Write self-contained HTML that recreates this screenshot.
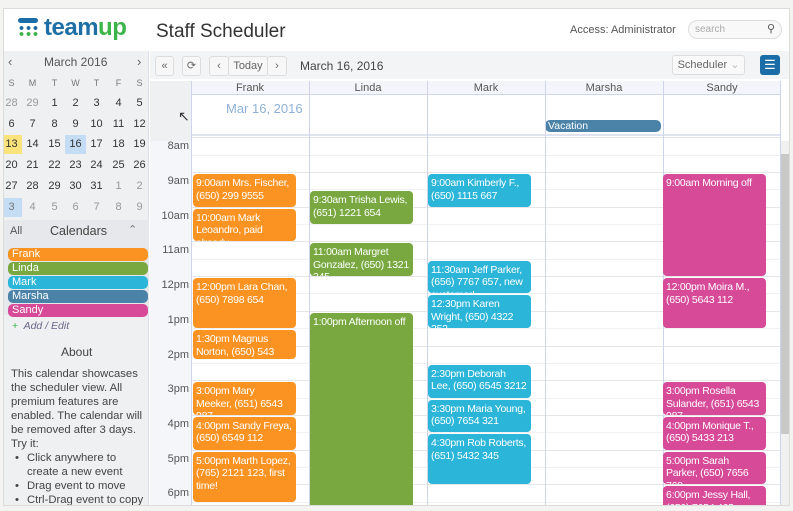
<!DOCTYPE html>
<html><head><meta charset="utf-8"><style>
*{margin:0;padding:0;box-sizing:border-box}
body{width:793px;height:511px;overflow:hidden;background:#f3f3f1;font-family:"Liberation Sans",sans-serif;position:relative}
.a{position:absolute}
#frame{left:3px;top:8px;width:787px;height:498px;background:#fff;border:1px solid #dcdcd8;overflow:hidden}
.side{left:0;top:42px;width:145px;height:460px;background:#eef0f2;border-right:1px solid #dde}
.mc{position:absolute;width:21px;text-align:center;font-size:11px;color:#333}
.g{color:#999}
.cal{position:absolute;left:4px;width:140px;height:13px;border-radius:5px;color:#fff;font-size:11px;padding-left:4px;line-height:13px}
.btn{position:absolute;top:5px;height:20px;background:#f7f7f7;border:1px solid #ddd;border-radius:3px;font-size:11px;color:#666;text-align:center;line-height:18px}
.ev{position:absolute;border-radius:4px;color:#fff;font-size:10.5px;letter-spacing:-0.25px;line-height:12.5px;padding:3px 4px 0 3px;overflow:hidden}
.o{background:#fa9322}.gr{background:#78a83f}.c{background:#2bb5d8}.p{background:#d64a98}
.hl{position:absolute;left:187px;width:589px;height:1px;background:#e4e6ea}
.hh{position:absolute;left:187px;width:589px;height:1px;background:#f0f1f3}
.tl{position:absolute;left:145px;width:40px;text-align:right;font-size:11px;color:#555}
.vl{position:absolute;width:1px;background:#d0d4ea}
.ch{position:absolute;top:72px;height:14px;font-size:11px;color:#555;text-align:center;line-height:14px}
.bl{position:relative;padding-left:16px;white-space:nowrap}
.bl span{position:absolute;left:4px}
</style></head><body>
<div id="frame" class="a">
 <div class="a" style="left:12px;top:9px">
  <div class="a" style="left:2px;top:0;width:20px;height:5px;border-radius:3px;background:#1a6da6"></div>
  <div class="a" style="left:2px;top:8px;width:20px;height:4px;background:radial-gradient(circle,#1a6da6 1.8px,transparent 2px) 0 0/7px 4px"></div>
  <div class="a" style="left:2px;top:14px;width:20px;height:4px;background:radial-gradient(circle,#3bb44a 1.8px,transparent 2px) 0 0/7px 4px"></div>
 </div>
 <div class="a" style="left:40px;top:5px;font-size:24px;font-weight:bold;letter-spacing:-0.5px;color:#1d6fa5">team<span style="color:#3bb44a">up</span></div>
 <div class="a" style="left:152px;top:12px;font-size:19px;color:#333">Staff Scheduler</div>
 <div class="a" style="left:566px;top:15px;font-size:11px;color:#555">Access: Administrator</div>
 <div class="a" style="left:684px;top:11px;width:94px;height:19px;border:1px solid #ddd;border-radius:10px;background:#f8f8f8;font-size:10px;color:#aaa;padding:3px 0 0 6px">search<span style="position:absolute;right:6px;top:1px;color:#555;font-size:11px">&#9906;</span></div>
 <div class="a side">
  <div class="a" style="left:4px;top:3px;font-size:13px;color:#666">&#8249;</div>
  <div class="a" style="left:40px;top:4px;font-size:12px;color:#555">March 2016</div>
  <div class="a" style="left:133px;top:3px;font-size:13px;color:#666">&#8250;</div>
 </div>
 <div class="a" style="left:146px;top:42px;width:640px;height:28px;background:#f3f4f6"></div>
 <div class="btn" style="left:151px;top:47px;width:19px">&#171;</div>
 <div class="btn" style="left:178px;top:47px;width:19px">&#10227;</div>
 <div class="btn" style="left:205px;top:47px;width:20px">&#8249;</div>
 <div class="btn" style="left:224px;top:47px;width:40px">Today</div>
 <div class="btn" style="left:263px;top:47px;width:20px">&#8250;</div>
 <div class="a" style="left:296px;top:50px;font-size:12px;color:#444">March 16, 2016</div>
 <div class="btn" style="left:668px;top:46px;width:73px;background:#f9f9f9">Scheduler <span style="color:#bbb">&#8964;</span></div>
 <div class="a" style="left:756px;top:46px;width:20px;height:20px;background:#1a6da6;border-radius:3px;color:#fff;font-size:13px;text-align:center;line-height:19px">&#9776;</div>
 <div class="a" style="left:146px;top:72px;width:41px;height:60px;background:#eef0f2"></div>
 <div class="a" style="left:146px;top:132px;width:41px;height:370px;background:#f4f6f9"></div>
 <div class="a" style="left:187px;top:72px;width:589px;height:14px;background:#f3f5fb;border-bottom:1px solid #cfd6ec"></div>
 <div class="a" style="left:187px;top:125px;width:589px;height:2px;background:#dfe4f0"></div>
 <div class="ch" style="left:187px;width:118px">Frank</div>
 <div class="ch" style="left:305px;width:118px">Linda</div>
 <div class="ch" style="left:423px;width:118px">Mark</div>
 <div class="ch" style="left:541px;width:118px">Marsha</div>
 <div class="ch" style="left:659px;width:118px">Sandy</div>
 <div class="a" style="left:222px;top:92px;font-size:13px;color:#8fb0d8">Mar 16, 2016</div>
 <div class="a" style="left:174px;top:99px;font-size:14px;color:#333">&#8598;</div>
 <div class="a" style="left:541px;top:111px;width:116px;height:12px;background:#4b83a8;border-radius:5px;color:#fff;font-size:10.5px;line-height:12px;padding-left:3px">Vacation</div>
 <div class="a" style="left:776px;top:132px;width:11px;height:370px;background:#f0f0f0"></div>
 <div class="a" style="left:777px;top:145px;width:9px;height:280px;background:#c8c8c6"></div>
</div>
<script>
var f=document.getElementById('frame');
function add(h){f.insertAdjacentHTML('beforeend',h)}
var dn=['S','M','T','W','T','F','S'];
var xs=[-3,18,40,61,82,104,125];
for(var i=0;i<7;i++)add('<div class="mc" style="left:'+xs[i]+'px;top:69px;font-size:9px;color:#777">'+dn[i]+'</div>');
var rows=[[28,29,1,2,3,4,5],[6,7,8,9,10,11,12],[13,14,15,16,17,18,19],[20,21,22,23,24,25,26],[27,28,29,30,31,1,2],[3,4,5,6,7,8,9]];
for(var r=0;r<6;r++)for(var c=0;c<7;c++){var d=rows[r][c];var g=(r==0&&d>20)||(r==4&&d<10)||(r==5&&c>0);var st='';
 if(r==2&&c==0)st='background:#f9e37a;';if(r==2&&c==3)st='background:#c5dcf5;';if(r==5&&c==0)st='background:#c5dcf5;color:#777;';
 add('<div class="mc'+(g?' g':'')+'" style="left:'+xs[c]+'px;top:'+(85+r*20.7)+'px;height:19px;line-height:19px;'+st+'">'+d+'</div>');}
add('<div class="a" style="left:0;top:211px;width:145px;height:95px;background:#e6e8eb"></div>');
add('<div class="a" style="left:6px;top:216px;font-size:11px;color:#555">All</div><div class="a" style="left:46px;top:215px;font-size:12.5px;color:#444">Calendars</div><div class="a" style="left:124px;top:214px;font-size:11px;color:#777">&#8963;</div>');
var cs=[['Frank','#fa9322'],['Linda','#78a83f'],['Mark','#2bb5d8'],['Marsha','#4b83a8'],['Sandy','#d64a98']];
for(var i=0;i<5;i++)add('<div class="cal" style="top:'+(239+i*14)+'px;background:'+cs[i][1]+'">'+cs[i][0]+'</div>');
add('<div class="a" style="left:8px;top:311px;font-size:10.5px;color:#668;font-style:italic"><span style="color:#3bb44a;font-style:normal">+</span>&nbsp; Add / Edit</div>');
add('<div class="a" style="left:57px;top:336px;font-size:12px;color:#444">About</div>');
add('<div class="a" style="left:7px;top:358px;width:140px;font-size:11.3px;line-height:14px;color:#444">This calendar showcases the scheduler view. All premium features are enabled. The calendar will be removed after 3 days. Try it:'+
 '<div class="bl"><span>&bull;</span>Click anywhere to<br>create a new event</div>'+
 '<div class="bl"><span>&bull;</span>Drag event to move</div>'+
 '<div class="bl"><span>&bull;</span>Ctrl-Drag event to copy</div></div>');
function Y(t){return 164+(t-9)*34.7}
for(var t=8;t<=18;t++){add('<div class="hl" style="top:'+(Y(t)-1)+'px"></div><div class="hh" style="top:'+(Y(t+0.5)-1)+'px"></div>');
 var l=t<12?t+'am':(t==12?'12pm':(t-12)+'pm');add('<div class="tl" style="top:'+(Y(t)+2)+'px">'+l+'</div>');}
[187,305,423,541,659,776].forEach(function(x){add('<div class="vl" style="left:'+x+'px;top:72px;height:430px"></div>')});
function ev(col,cls,s,e,txt){var x=[189,306,424,542,659][col];add('<div class="ev '+cls+'" style="left:'+x+'px;width:103px;top:'+(Y(s)+1)+'px;height:'+(Y(e)-Y(s)-2)+'px">'+txt+'</div>')}
ev(0,'o',9,10,'9:00am Mrs. Fischer, (650) 299 9555');
ev(0,'o',10,11,'10:00am Mark Leoandro, paid already');
ev(0,'o',12,13.5,'12:00pm Lara Chan, (650) 7898 654');
ev(0,'o',13.5,14.4,'1:30pm Magnus Norton, (650) 543 7654');
ev(0,'o',15,16,'3:00pm Mary Meeker, (651) 6543 987');
ev(0,'o',16,17,'4:00pm Sandy Freya, (650) 6549 112');
ev(0,'o',17,18.5,'5:00pm Marth Lopez, (765) 2121 123, first time!');
ev(1,'gr',9.5,10.5,'9:30am Trisha Lewis, (651) 1221 654');
ev(1,'gr',11,12,'11:00am Margret Gonzalez, (650) 1321 345');
ev(1,'gr',13,19,'1:00pm Afternoon off');
ev(2,'c',9,10,'9:00am Kimberly F., (650) 1115 667');
ev(2,'c',11.5,12.5,'11:30am Jeff Parker, (656) 7767 657, new customer!');
ev(2,'c',12.5,13.5,'12:30pm Karen Wright, (650) 4322 252');
ev(2,'c',14.5,15.5,'2:30pm Deborah Lee, (650) 6545 3212');
ev(2,'c',15.5,16.5,'3:30pm Maria Young, (650) 7654 321');
ev(2,'c',16.5,18,'4:30pm Rob Roberts, (651) 5432 345');
ev(4,'p',9,12,'9:00am Morning off');
ev(4,'p',12,13.5,'12:00pm Moira M., (650) 5643 112');
ev(4,'p',15,16,'3:00pm Rosella Sulander, (651) 6543 987');
ev(4,'p',16,17,'4:00pm Monique T., (650) 5433 213');
ev(4,'p',17,18,'5:00pm Sarah Parker, (650) 7656 768');
ev(4,'p',18,19,'6:00pm Jessy Hall, (650) 7654 465');
</script>
</body></html>
